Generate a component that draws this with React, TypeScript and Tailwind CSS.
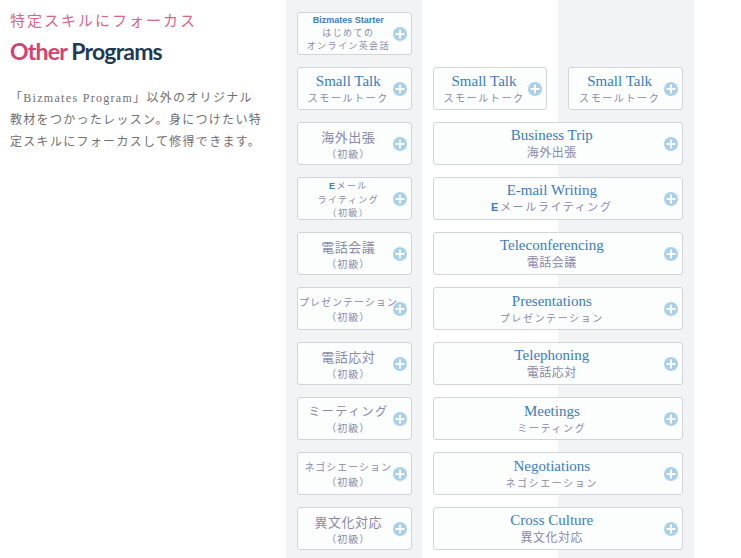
import { Fragment } from "react"
import type { ReactNode } from "react"

const SERIF = "font-['Liberation_Serif','Noto_Sans_CJK_JP',serif]"
const JP = "font-['Noto_Sans_CJK_JP',sans-serif]"

type Card = {
  key: string
  title?: ReactNode
  sub: ReactNode
  wide?: boolean
  big?: boolean
}

function PlusIcon() {
  return (
    <svg width="14" height="14" viewBox="0 0 14 14" className="absolute right-[4px] top-1/2 -translate-y-1/2">
      <circle cx="7" cy="7" r="7" fill="#a9d0ea" />
      <path d="M7 3.2v7.6M3.2 7h7.6" stroke="#fff" strokeWidth="1.8" strokeLinecap="round" />
    </svg>
  )
}

function ProgramCard({ card }: { card: Card }) {
  return (
    <div
      className={`relative flex h-[43px] flex-col items-center justify-center rounded-[3px] border border-[#d2d4d8] bg-[#fcfdfd] pr-[12px] text-center ${
        card.wide ? "col-span-2" : ""
      }`}
    >
      {card.title && (
        <div className={`${SERIF} text-[15px] leading-[17px] text-[#3b7cc2]`}>{card.title}</div>
      )}
      <div
        className={`${JP} whitespace-nowrap text-[#8b89aa] ${
          card.big ? "text-[13px] leading-[19px] tracking-[0.5px]" : "text-[10px] leading-[15px] tracking-[1.6px]"
        }`}
      >
        {card.sub}
      </div>
      <PlusIcon />
    </div>
  )
}

const Beginner = () => <div className="text-[10px] leading-[15px] tracking-[1px]">（初級）</div>

const BoldE = () => <span className="font-['Liberation_Sans',sans-serif] font-bold text-[#3b7cc2]">E</span>

const SHORT: Card[] = [
  { key: "trip", big: true, sub: <><div>海外出張</div><Beginner /></> },
  {
    key: "mail",
    sub: (
      <div className="text-[9px] leading-[13px] tracking-[1.4px]">
        <div><BoldE />メール</div>
        <div>ライティング</div>
        <div>（初級）</div>
      </div>
    ),
  },
  { key: "conf", big: true, sub: <><div>電話会議</div><Beginner /></> },
  { key: "pres", sub: <><div className="tracking-[1px]">プレゼンテーション</div><Beginner /></> },
  { key: "tel", big: true, sub: <><div>電話応対</div><Beginner /></> },
  { key: "meet", sub: <><div className="text-[12px] leading-[18px] tracking-[1.5px]">ミーティング</div><Beginner /></> },
  { key: "nego", sub: <><div className="tracking-[1px]">ネゴシエーション</div><Beginner /></> },
  { key: "cross", big: true, sub: <><div>異文化対応</div><Beginner /></> },
]

const WIDE: Card[] = [
  { key: "w-trip", wide: true, title: "Business Trip", sub: <span className="text-[12px] tracking-[0.5px]">海外出張</span> },
  { key: "w-mail", wide: true, title: "E-mail Writing", sub: <span className="text-[11px]"><BoldE />メールライティング</span> },
  { key: "w-conf", wide: true, title: "Teleconferencing", sub: <span className="text-[12px] tracking-[0.5px]">電話会議</span> },
  { key: "w-pres", wide: true, title: "Presentations", sub: "プレゼンテーション" },
  { key: "w-tel", wide: true, title: "Telephoning", sub: <span className="text-[12px] tracking-[0.5px]">電話応対</span> },
  { key: "w-meet", wide: true, title: "Meetings", sub: "ミーティング" },
  { key: "w-nego", wide: true, title: "Negotiations", sub: "ネゴシエーション" },
  { key: "w-cross", wide: true, title: "Cross Culture", sub: <span className="text-[12px] tracking-[0.5px]">異文化対応</span> },
]

const smallTalk = (key: string): Card => ({ key, title: "Small Talk", sub: "スモールトーク" })

export default function App() {
  return (
    <div className="flex h-[558px] overflow-hidden bg-white">
      <div className="w-[286px] shrink-0 pl-[10px] pt-[12px]">
        <p className={`${SERIF} text-[15px] leading-[18px] tracking-[2px] text-[#d9668a]`}>特定スキルにフォーカス</p>
        <h2 className="mt-[7px] font-['Lato',sans-serif] text-[23px] font-bold leading-[28px] tracking-[-0.8px]">
          <span className="text-[#d6416f]">Other</span> <span className="text-[#1f3a55]">Programs</span>
        </h2>
        <p className={`${SERIF} mt-[22px] whitespace-nowrap text-[12px] leading-[22px] tracking-[1.3px] text-[#6f6f73]`}>
          「Bizmates Program」以外のオリジナル
          <br />
          教材をつかったレッスン。身につけたい特
          <br />
          定スキルにフォーカスして修得できます。
        </p>
      </div>

      <div className="grid w-[408px] shrink-0 auto-rows-[43px] grid-cols-3 content-start gap-x-[21px] gap-y-[12px] bg-[linear-gradient(to_right,#f2f3f5_136px,#ffffff_136px,#ffffff_272px,#f2f3f5_272px)] px-[11px] pt-[12px]">
        {/* starter row: single card, the rest of the row stays empty */}
        <div className="relative flex h-[43px] flex-col items-center justify-center rounded-[3px] border border-[#d2d4d8] bg-[#fcfdfd] pr-[12px] text-center">
          <div className="font-['Liberation_Sans',sans-serif] text-[9px] font-bold leading-[11px] text-[#3b7cc2]">
            Bizmates Starter
          </div>
          <div className={`${JP} text-[9px] leading-[13px] tracking-[1.4px] text-[#8b89aa]`}>
            <div>はじめての</div>
            <div>オンライン英会話</div>
          </div>
          <PlusIcon />
        </div>
        <div className="col-span-2" />

        {["st-1", "st-2", "st-3"].map((k) => (
          <ProgramCard key={k} card={smallTalk(k)} />
        ))}

        {SHORT.map((card, i) => (
          <Fragment key={card.key}>
            <ProgramCard card={card} />
            <ProgramCard card={WIDE[i]} />
          </Fragment>
        ))}
      </div>
      <div className="flex-1" />
    </div>
  )
}
